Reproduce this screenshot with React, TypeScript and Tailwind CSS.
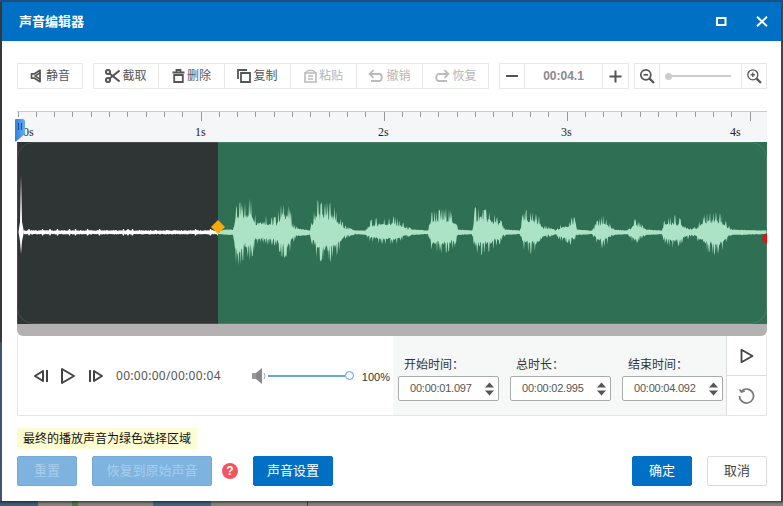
import React from "react";

const SANS = "font-['Liberation_Sans','Noto_Sans_CJK_SC',sans-serif]";

function rnd(i: number) {
  const v = Math.sin(i * 12.9898) * 43758.5453;
  return v - Math.floor(v);
}

const ENV: [number, number, number][] = [
  [218, 2, 2],[228, 3, 3],[233, 3, 3],[235, 24, 29],[238, 30, 38],[245, 29, 26],[248, 36, 29],[252, 32, 26],[256, 17, 13],[262, 19, 10],[270, 15, 14],[276, 15, 14],[282, 31, 24],[286, 32, 26],[290, 24, 22],[293, 10, 10],[298, 4, 4],[310, 2, 3],[313, 17, 17],[316, 32, 26],[325, 30, 32],[332, 32, 30],[338, 18, 22],[345, 7, 7],[355, 2, 2],[366, 2, 3],[370, 12, 10],[380, 15, 12],[395, 16, 13],[403, 10, 8],[412, 3, 3],[428, 2, 2],[431, 21, 19],[440, 23, 21],[447, 25, 21],[455, 18, 15],[458, 3, 3],[472, 2, 2],[475, 25, 23],[482, 26, 23],[490, 21, 19],[500, 15, 12],[505, 3, 3],[520, 2, 2],[523, 21, 18],[530, 23, 23],[538, 19, 18],[544, 8, 7],[556, 2, 2],[560, 8, 9],[570, 12, 12],[574, 17, 12],[577, 3, 3],[592, 2, 2],[596, 10, 10],[602, 18, 17],[608, 12, 12],[614, 3, 3],[627, 2, 2],[630, 5, 5],[634, 14, 14],[640, 10, 8],[646, 3, 3],[662, 2, 2],[665, 15, 13],[675, 17, 17],[685, 10, 9],[692, 3, 3],[697, 8, 8],[703, 17, 17],[712, 23, 23],[720, 21, 23],[727, 10, 10],[732, 3, 3],[767, 2, 2],
];

function envAt(x: number): [number, number] {
  for (let i = 1; i < ENV.length; i++) {
    if (x <= ENV[i][0]) {
      const a = ENV[i - 1];
      const b = ENV[i];
      const t = (x - a[0]) / (b[0] - a[0] || 1);
      return [a[1] + (b[1] - a[1]) * t, a[2] + (b[2] - a[2]) * t];
    }
  }
  return [2, 2];
}

const CY = 90.3;
const OFF = 17;

function noise(i: number, amp: number) {
  if (amp <= 5) return 0.75 + 0.25 * rnd(i);
  const r = rnd(i);
  return r > 0.72 ? 0.88 + 0.14 * rnd(i + 333) : 0.4 + 0.3 * r;
}

function greenPath() {
  const top: string[] = [];
  const bot: string[] = [];
  for (let x = 218, i = 0; x <= 767; x += 0.6, i++) {
    const [t, b] = envAt(x);
    top.push(`${(x - OFF).toFixed(1)},${(CY - t * noise(i, t)).toFixed(1)}`);
    bot.unshift(`${(x - OFF).toFixed(1)},${(CY + b * noise(i + 1000, b)).toFixed(1)}`);
  }
  return `M${top.join("L")}L${bot.join("L")}Z`;
}

function whitePath() {
  const top: string[] = [];
  const bot: string[] = [];
  for (let x = 24, i = 0; x <= 218; x += 0.5, i++) {
    const s = rnd(Math.floor(i / 3) * 1.37 + 7.3) > 0.9;
    const a = s ? 3.2 : 1.4 + rnd(i + 0.5) * 0.9;
    const b = s ? 3.2 : 1.4 + rnd(i + 50.5) * 0.9;
    top.push(`${(x - OFF).toFixed(1)},${(CY - a).toFixed(1)}`);
    bot.unshift(`${(x - OFF).toFixed(1)},${(CY + b).toFixed(1)}`);
  }
  return `M${top.join("L")}L${bot.join("L")}Z`;
}

const GREEN = greenPath();
const WHITE = whitePath();

type IconP = { c: string };

const Mute = ({ c }: IconP) => (
  <svg width="14" height="14" viewBox="0 0 14 14" fill="none" stroke={c} strokeWidth="1.7">
    <path d="M1.5 4.8H4.5L10 1.2V12.8L4.5 9.2H1.5Z" strokeLinejoin="round" />
    <path d="M10.5 3.5 L5 7 L10.5 10.5" strokeWidth="1.5" />
  </svg>
);
const Cut = ({ c }: IconP) => (
  <svg width="15" height="14" viewBox="0 0 15 14" fill="none" stroke={c} strokeWidth="2">
    <circle cx="3" cy="3" r="2.1" />
    <circle cx="3" cy="11" r="2.1" />
    <path d="M4.6 4.4 L14.5 12.5 M4.6 9.6 L14.5 1.5" />
  </svg>
);
const Trash = ({ c }: IconP) => (
  <svg width="13" height="14" viewBox="0 0 13 14" fill="none" stroke={c} strokeWidth="1.8">
    <path d="M0.5 3.5H12.5M4.5 3V1H8.5V3" />
    <path d="M2.2 6H10.8V13H2.2Z" />
  </svg>
);
const Copy = ({ c }: IconP) => (
  <svg width="14" height="14" viewBox="0 0 14 14" fill="none" stroke={c} strokeWidth="1.8">
    <path d="M1 10V1H10" />
    <path d="M4 4H13V13H4Z" />
  </svg>
);
const Paste = ({ c }: IconP) => (
  <svg width="13" height="14" viewBox="0 0 13 14" fill="none" stroke={c} strokeWidth="1.6">
    <path d="M1 4V13H12V4Z" />
    <path d="M4 1.5H9M4 7H9M4 10H9M1 4L4 1.5M12 4L9 1.5" />
  </svg>
);
const Undo = ({ c }: IconP) => (
  <svg width="16" height="14" viewBox="0 0 16 14" fill="none" stroke={c} strokeWidth="1.8">
    <path d="M2 5H11.5C14.5 5 14.5 12 11.5 12H3" />
    <path d="M5.5 1.2 L1.6 5 L5.5 8.8" />
  </svg>
);
const Redo = ({ c }: IconP) => (
  <svg width="16" height="14" viewBox="0 0 16 14" fill="none" stroke={c} strokeWidth="1.8">
    <path d="M14 5H4.5C1.5 5 1.5 12 4.5 12H13" />
    <path d="M10.5 1.2 L14.4 5 L10.5 8.8" />
  </svg>
);
const Zoom = ({ plus }: { plus?: boolean }) => (
  <svg width="16" height="16" viewBox="0 0 16 16" fill="none" stroke="#555" strokeWidth={plus ? 1.3 : 1.7}>
    <circle cx="6.8" cy="6.8" r="5" />
    <path d="M10.6 10.6 L15 15" strokeWidth="2.2" />
    <path d="M4.5 6.8H9.1" />
    {plus && <path d="M6.8 4.5V9.1" />}
  </svg>
);

function ToolBtn({ icon, label, disabled, first }: { icon: React.ReactNode; label: string; disabled?: boolean; first?: boolean }) {
  return (
    <div
      className={`flex h-[26px] w-[66px] items-center justify-center gap-[2px] border border-[#e8e8e8] bg-white text-[12px] ${first ? "" : "-ml-px w-[67px]"} ${disabled ? "text-[#b5b5b5]" : "text-[#555]"}`}
    >
      {icon}
      <span>{label}</span>
    </div>
  );
}

function TimeBox({ label, value }: { label: string; value: string }) {
  return (
    <div className="flex w-[101px] flex-col">
      <div className="h-[28px] pl-[6px] pt-[8px] text-[12px] leading-[18px] text-[#333]">{label}</div>
      <div className="flex h-[25px] items-center justify-between rounded-[2px] border border-[#aaa] bg-white pl-[11px] pr-[3px]">
        <span className="text-[11px] tracking-[-0.22px] text-[#555]">{value}</span>
        <svg width="11" height="16" viewBox="0 0 11 16" fill="#555">
          <path d="M5.5 1.5 L10 6.5H1Z" />
          <path d="M5.5 14.5 L10 9.5H1Z" />
        </svg>
      </div>
    </div>
  );
}

function SmallBtn({ w, label, kind }: { w: string; label: string; kind: "off" | "on" | "plain" }) {
  const k =
    kind === "off"
      ? "bg-[#7fb3df] border-[#74a9d8] text-[#a9cdec]"
      : kind === "on"
        ? "bg-[#0070c4] border-[#0070c4] text-white"
        : "bg-white border-[#dcdcdc] text-[#444]";
  return (
    <div className={`flex h-[30px] items-center justify-center rounded-[2px] border text-[13px] ${w} ${k}`}>{label}</div>
  );
}

const TICKS = Array.from({ length: 41 }, (_, i) => i);

export default function App() {
  return (
    <div className={`relative flex h-[506px] w-[783px] flex-col overflow-hidden bg-[#333] ${SANS}`}>
      <div className="h-[2px] bg-[#1f4e7e]" />
      <div className="flex h-[499px]">
        <div className="flex w-[2px] flex-col">
          <div className="h-[340px] bg-[#383838]" />
          <div className="flex-1 bg-[#3d5570]" />
        </div>
        <div className="flex w-[779px] flex-col bg-white">
          <div className="flex h-[39px] items-center bg-[#0070c4] pl-[17px] pr-[13px]">
            <span className="text-[13px] font-bold text-white">声音编辑器</span>
            <div className="flex-1" />
            <svg width="11" height="9" viewBox="0 0 11 9" fill="none" stroke="white" strokeWidth="2">
              <rect x="1" y="1" width="8.5" height="7" />
            </svg>
            <svg className="ml-[29px]" width="12" height="11" viewBox="0 0 12 11" fill="none" stroke="white" strokeWidth="2">
              <path d="M1 0.8 L11 10.2 M11 0.8 L1 10.2" />
            </svg>
          </div>

          <div className="flex flex-1 flex-col pl-[15px] pr-[14px]">
            <div className="mt-[22px] flex h-[26px] items-center">
              <ToolBtn first icon={<Mute c="#555" />} label="静音" />
              <div className="w-[10px]" />
              <ToolBtn first icon={<Cut c="#555" />} label="截取" />
              <ToolBtn icon={<Trash c="#555" />} label="删除" />
              <ToolBtn icon={<Copy c="#555" />} label="复制" />
              <ToolBtn disabled icon={<Paste c="#bbb" />} label="粘贴" />
              <ToolBtn disabled icon={<Undo c="#bbb" />} label="撤销" />
              <ToolBtn disabled icon={<Redo c="#bbb" />} label="恢复" />
              <div className="w-[10px]" />
              <div className="flex h-[26px] w-[130px] border border-[#e8e8e8] bg-white">
                <div className="flex w-[25px] items-center justify-center border-r border-[#e8e8e8]">
                  <div className="h-[2px] w-[12px] bg-[#555]" />
                </div>
                <div className="flex flex-1 items-center justify-center text-[12px] font-bold text-[#8a8a90]">00:04.1</div>
                <div className="flex w-[26px] items-center justify-center border-l border-[#e8e8e8]">
                  <svg width="13" height="13" viewBox="0 0 13 13" stroke="#555" strokeWidth="2"><path d="M0.5 6.5H12.5M6.5 0.5V12.5" /></svg>
                </div>
              </div>
              <div className="w-[5px]" />
              <div className="flex h-[26px] w-[133px] border border-[#e8e8e8] bg-white">
                <div className="flex w-[25px] items-center justify-center border-r border-[#e8e8e8]"><Zoom /></div>
                <div className="flex flex-1 items-center pl-[5px] pr-[10px]">
                  <div className="h-[7px] w-[7px] rounded-full bg-[#ccc]" />
                  <div className="h-[2px] flex-1 bg-[#ccc]" />
                </div>
                <div className="flex w-[25px] items-center justify-center border-l border-[#e8e8e8]"><Zoom plus /></div>
              </div>
            </div>

            <div className="relative mt-[22px] h-[31px] w-[750px] border-t border-[#ccc] bg-[#f5f6f8]">
              <svg className="absolute left-0 top-0" width="752" height="12" stroke="#999" strokeWidth="1">
                {TICKS.map((i) => {
                  const x = Math.round(0.5 + i * 18.3) + 0.5;
                  const major = i % 10 === 0 && i > 0;
                  return <path key={i} d={`M${x} 0V${major ? 9 : 5}`} />;
                })}
              </svg>
              <span className="absolute left-[6px] top-[12px] font-['Liberation_Serif',serif] text-[12px] leading-[16px] text-[#222]">0s</span>
              <span className="absolute left-[178px] top-[12px] font-['Liberation_Serif',serif] text-[12px] leading-[16px] text-[#222]">1s</span>
              <span className="absolute left-[361px] top-[12px] font-['Liberation_Serif',serif] text-[12px] leading-[16px] text-[#222]">2s</span>
              <span className="absolute left-[544px] top-[12px] font-['Liberation_Serif',serif] text-[12px] leading-[16px] text-[#222]">3s</span>
              <span className="absolute left-[713px] top-[12px] font-['Liberation_Serif',serif] text-[12px] leading-[16px] text-[#222]">4s</span>
              <svg className="absolute left-[-2px] top-[7px]" width="12" height="23" viewBox="0 0 12 23">
                <defs>
                  <linearGradient id="hd" x1="0" y1="0" x2="1" y2="0">
                    <stop offset="0" stopColor="#2f80e0" />
                    <stop offset="1" stopColor="#67aef0" />
                  </linearGradient>
                </defs>
                <path d="M0 1Q0 0 1 0H8Q9 0 10 1.5V15L1 22.5H0Z" fill="url(#hd)" />
                <path d="M3.5 4V11M6.5 4V11" stroke="#1a4f94" strokeWidth="1" />
              </svg>
            </div>

            <div className="relative flex h-[182px] w-[750px] overflow-hidden">
              <div className="w-[201px] bg-[#2f3535]" />
              <div className="flex-1 bg-[#2f6f53]" />
              <div className="absolute inset-0 rounded-[16px] border border-[#ffffff1f]" />
              <svg className="absolute left-0 top-0" width="750" height="182">
                <path d="M0 0V182" stroke="#a02020" strokeWidth="2" />
                <path d={WHITE} fill="#ffffff" />
                <path d={GREEN} fill="#ace3c6" />
                <path d="M4 33L5 80L7 90L5 99L4 112L3 99L1.5 90L3 80Z" fill="#ffffff" />
                <path d="M201 78L208 85L201 92L194 85Z" fill="#f5a90f" />
                <path d="M750 91V102L746.5 100L745 97L746.5 93Z" fill="#e80f0f" />
              </svg>
            </div>
            <div className="h-[12px] w-[750px] rounded-b-[6px] bg-[#b3b1b1]" />

            <div className="flex h-[80px] w-[750px] border border-t-0 border-[#e6e6e6]">
              <div className="flex w-[375px] items-center pl-[14px]">
                <svg width="16" height="14" viewBox="0 0 16 14" fill="none" stroke="#444" strokeWidth="2">
                  <path d="M11 2V12L3 7Z" strokeLinejoin="round" />
                  <path d="M15 1V13" />
                </svg>
                <svg className="ml-[12px]" width="16" height="18" viewBox="0 0 16 18" fill="none" stroke="#444" strokeWidth="2">
                  <path d="M2 2V16L14 9Z" strokeLinejoin="round" />
                </svg>
                <svg className="ml-[13px]" width="16" height="14" viewBox="0 0 16 14" fill="none" stroke="#444" strokeWidth="2">
                  <path d="M5 2V12L13 7Z" strokeLinejoin="round" />
                  <path d="M1 1V13" />
                </svg>
                <span className="ml-[11px] font-['Noto_Sans',sans-serif] text-[12px] tracking-[0.3px] text-[#555]">00:00:00/00:00:04</span>
                <svg className="ml-[31px]" width="15" height="18" viewBox="0 0 15 18">
                  <path d="M0 6H4V12H0Z" fill="#999" />
                  <path d="M4 6L10 1V17L4 12Z" fill="#888" />
                  <path d="M12 6Q14 9 12 12" fill="none" stroke="#aaa" strokeWidth="1" />
                </svg>
                <div className="ml-[1px] h-[2px] w-[77px] bg-[#6aa5e0]" />
                <div className="h-[9px] w-[9px] rounded-full border-[1.5px] border-[#5b9bdc] bg-white" />
                <span className="ml-[8px] mt-[3px] text-[11px] text-[#333]">100%</span>
              </div>
              <div className="flex flex-1 gap-[11px] bg-[#f6f7f7] pl-[5px] pt-[12px]">
                <TimeBox label="开始时间：" value="00:00:01.097" />
                <TimeBox label="总时长：" value="00:00:02.995" />
                <TimeBox label="结束时间：" value="00:00:04.092" />
              </div>
              <div className="flex w-[40px] flex-col">
                <div className="flex h-[40px] items-center justify-center border-b border-l border-[#ddd] bg-white">
                  <svg width="14" height="16" viewBox="0 0 14 16" fill="none" stroke="#444" strokeWidth="1.8">
                    <path d="M1.5 1.8V14.2L12.5 8Z" strokeLinejoin="round" />
                  </svg>
                </div>
                <div className="flex flex-1 items-center justify-center border-l border-[#ddd] bg-white">
                  <svg width="17" height="17" viewBox="0 0 17 17" fill="none" stroke="#777" strokeWidth="1.7">
                    <path d="M3.6 4A7 7 0 1 1 1.5 9" />
                    <path d="M1.5 2.5L3.4 5L6.8 4" strokeWidth="1.6" />
                  </svg>
                </div>
              </div>
            </div>

            <div className="mt-[12px] flex h-[21px] w-[180px] items-center justify-center bg-[#fefdd2] text-[12px] text-[#111]">
              最终的播放声音为绿色选择区域
            </div>

            <div className="mt-[7px] flex h-[30px] w-[750px] items-center">
              <SmallBtn w="w-[60px]" label="重置" kind="off" />
              <div className="w-[15px]" />
              <SmallBtn w="w-[120px]" label="恢复到原始声音" kind="off" />
              <div className="flex h-[16px] w-[16px] ml-[10px] items-center justify-center rounded-full bg-[#f4545f] text-[12px] font-bold text-white">?</div>
              <div className="w-[15px]" />
              <SmallBtn w="w-[80px]" label="声音设置" kind="on" />
              <div className="flex-1" />
              <SmallBtn w="w-[60px]" label="确定" kind="on" />
              <div className="w-[15px]" />
              <SmallBtn w="w-[60px]" label="取消" kind="plain" />
            </div>
          </div>
        </div>
        <div className="w-[2px] bg-[#444]" />
      </div>
      <div className="relative flex h-[5px] bg-[#85817c]">
        <div className="w-[38px] bg-[#3c5c78]" />
        <div className="w-[34px] bg-[#85817c]" />
        <div className="w-[6px] bg-[#4d7a3c]" />
        <div className="w-[75px] bg-[#85817c]" />
        <div className="w-[58px] bg-[#41627f]" />
        <div className="w-[96px] bg-[#85817c]" />
        <div className="w-px bg-[#8a2a2a]" />
        <div className="flex-1 bg-[#85817c]" />
        <div className="absolute inset-x-0 top-0 h-[3px] bg-gradient-to-b from-[#00000080] to-transparent" />
      </div>
    </div>
  );
}
